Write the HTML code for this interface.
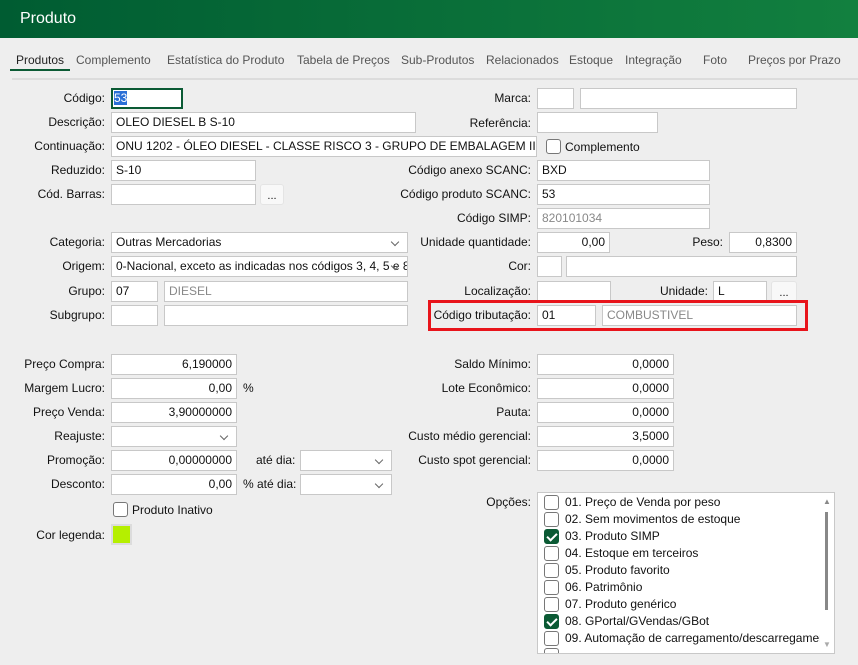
<!DOCTYPE html>
<html><head><meta charset="utf-8"><style>
*{box-sizing:border-box;margin:0;padding:0}
body{width:858px;height:665px;overflow:hidden;background:#eeeeee;font-family:"Liberation Sans",sans-serif;font-size:12px;color:#111;position:relative}
.hd{position:absolute;left:0;top:0;width:858px;height:38px;background:linear-gradient(90deg,#005c32,#12803f);color:#fff;font-size:16px;padding:10px 0 0 20px}
.tab{position:absolute;top:53px;font-size:12px;color:#555}
.l{position:absolute;text-align:right;white-space:nowrap;height:20px;line-height:20px}
.i{position:absolute;background:#fff;border:1px solid #c8c8c8;height:21px;line-height:19px;padding:0 4px;white-space:nowrap;overflow:hidden}
.r{text-align:right}
.g{color:#888}
.s::after{content:"";position:absolute;right:9px;top:6px;width:5px;height:5px;border-right:1px solid #666;border-bottom:1px solid #666;transform:rotate(45deg)}
.b{position:absolute;background:#f8f8f8;border:1px solid #e4e4e4;border-radius:3px;height:21px;text-align:center;line-height:22px;font-size:11px}
.cb{position:absolute;width:15px;height:15px;border:1px solid #777;border-radius:3px;background:#fff}
.ck{background:#0b5a34;border-color:#0b5a34}
.ck::after{content:"";position:absolute;left:4px;top:1px;width:4px;height:8px;border-right:2px solid #fff;border-bottom:2px solid #fff;transform:rotate(45deg)}
.opt{position:absolute;left:565px;height:17px;line-height:17px}
</style></head><body>
<div class="hd">Produto</div>
<div class="tab" style="left:16px;color:#222">Produtos</div>
<div style="position:absolute;left:10px;top:69px;width:60px;height:2px;background:#0b5a34"></div>
<div class="tab" style="left:76px">Complemento</div>
<div class="tab" style="left:167px">Estatística do Produto</div>
<div class="tab" style="left:297px">Tabela de Preços</div>
<div class="tab" style="left:401px">Sub-Produtos</div>
<div class="tab" style="left:486px">Relacionados</div>
<div class="tab" style="left:569px">Estoque</div>
<div class="tab" style="left:625px">Integração</div>
<div class="tab" style="left:703px">Foto</div>
<div class="tab" style="left:748px">Preços por Prazo</div>
<div style="position:absolute;left:12px;top:78px;width:846px;height:2px;background:#dcdcdc"></div>

<div class="l" style="left:0;width:105px;top:88px">Código:</div>
<div class="i" style="left:111px;top:88px;width:72px;border:2px solid #0b5a34;line-height:17px;padding:0 1px"><span style="background:#2a6fd6;color:#fff">53</span></div>
<div class="l" style="left:0;width:105px;top:112px">Descrição:</div>
<div class="i" style="left:111px;top:112px;width:305px">OLEO DIESEL B S-10</div>
<div class="l" style="left:0;width:105px;top:136px">Continuação:</div>
<div class="i" style="left:111px;top:136px;width:426px">ONU 1202 - ÓLEO DIESEL - CLASSE RISCO 3 - GRUPO DE EMBALAGEM III</div>
<div class="l" style="left:0;width:105px;top:160px">Reduzido:</div>
<div class="i" style="left:111px;top:160px;width:145px">S-10</div>
<div class="l" style="left:0;width:105px;top:184px">Cód. Barras:</div>
<div class="i" style="left:111px;top:184px;width:145px"></div>
<div class="b" style="left:260px;top:184px;width:24px">...</div>
<div class="l" style="left:0;width:105px;top:232px">Categoria:</div>
<div class="i s" style="left:111px;top:232px;width:297px">Outras Mercadorias</div>
<div class="l" style="left:0;width:105px;top:256px">Origem:</div>
<div class="i s" style="left:111px;top:256px;width:297px;padding-right:20px">0-Nacional, exceto as indicadas nos códigos 3, 4, 5 e 8</div>
<div class="l" style="left:0;width:105px;top:281px">Grupo:</div>
<div class="i" style="left:111px;top:281px;width:47px">07</div>
<div class="i g" style="left:164px;top:281px;width:244px">DIESEL</div>
<div class="l" style="left:0;width:105px;top:305px">Subgrupo:</div>
<div class="i" style="left:111px;top:305px;width:47px"></div>
<div class="i" style="left:164px;top:305px;width:244px"></div>

<div class="l" style="left:300px;width:231px;top:88px">Marca:</div>
<div class="i" style="left:537px;top:88px;width:37px"></div>
<div class="i" style="left:580px;top:88px;width:217px"></div>
<div class="l" style="left:300px;width:231px;top:113px">Referência:</div>
<div class="i" style="left:537px;top:112px;width:121px"></div>
<div class="cb" style="left:546px;top:139px"></div>
<div class="l" style="left:565px;top:137px">Complemento</div>
<div class="l" style="left:300px;width:231px;top:160px">Código anexo SCANC:</div>
<div class="i" style="left:537px;top:160px;width:173px">BXD</div>
<div class="l" style="left:300px;width:231px;top:184px">Código produto SCANC:</div>
<div class="i" style="left:537px;top:184px;width:173px">53</div>
<div class="l" style="left:300px;width:231px;top:208px">Código SIMP:</div>
<div class="i g" style="left:537px;top:208px;width:173px">820101034</div>
<div class="l" style="left:300px;width:231px;top:232px">Unidade quantidade:</div>
<div class="i r" style="left:537px;top:232px;width:73px">0,00</div>
<div class="l" style="left:600px;width:123px;top:232px">Peso:</div>
<div class="i r" style="left:729px;top:232px;width:68px">0,8300</div>
<div class="l" style="left:300px;width:231px;top:256px">Cor:</div>
<div class="i" style="left:537px;top:256px;width:25px"></div>
<div class="i" style="left:566px;top:256px;width:231px"></div>
<div class="l" style="left:300px;width:231px;top:281px">Localização:</div>
<div class="i" style="left:537px;top:281px;width:74px"></div>
<div class="l" style="left:600px;width:108px;top:281px">Unidade:</div>
<div class="i" style="left:713px;top:281px;width:54px">L</div>
<div class="b" style="left:771px;top:281px;width:26px">...</div>
<div style="position:absolute;left:428px;top:300px;width:380px;height:31px;border:3px solid #e8141b"></div>
<div class="l" style="left:300px;width:231px;top:305px">Código tributação:</div>
<div class="i" style="left:537px;top:305px;width:59px">01</div>
<div class="i g" style="left:602px;top:305px;width:195px">COMBUSTIVEL</div>

<div class="l" style="left:0;width:105px;top:354px">Preço Compra:</div>
<div class="i r" style="left:111px;top:354px;width:126px">6,190000</div>
<div class="l" style="left:0;width:105px;top:378px">Margem Lucro:</div>
<div class="i r" style="left:111px;top:378px;width:126px">0,00</div>
<div class="l" style="left:243px;top:378px">%</div>
<div class="l" style="left:0;width:105px;top:402px">Preço Venda:</div>
<div class="i r" style="left:111px;top:402px;width:126px">3,90000000</div>
<div class="l" style="left:0;width:105px;top:426px">Reajuste:</div>
<div class="i s" style="left:111px;top:426px;width:126px"></div>
<div class="l" style="left:0;width:105px;top:450px">Promoção:</div>
<div class="i r" style="left:111px;top:450px;width:126px">0,00000000</div>
<div class="l" style="left:256px;top:450px">até dia:</div>
<div class="i s" style="left:300px;top:450px;width:92px"></div>
<div class="l" style="left:0;width:105px;top:474px">Desconto:</div>
<div class="i r" style="left:111px;top:474px;width:126px">0,00</div>
<div class="l" style="left:243px;top:474px">% até dia:</div>
<div class="i s" style="left:300px;top:474px;width:92px"></div>
<div class="cb" style="left:113px;top:502px"></div>
<div class="l" style="left:132px;top:500px">Produto Inativo</div>
<div class="l" style="left:0;width:105px;top:525px">Cor legenda:</div>
<div style="position:absolute;left:111px;top:524px;width:21px;height:21px;background:#dcdcdc;padding:2px"><div style="width:17px;height:17px;background:#b5ef00"></div></div>

<div class="l" style="left:300px;width:231px;top:354px">Saldo Mínimo:</div>
<div class="i r" style="left:537px;top:354px;width:137px">0,0000</div>
<div class="l" style="left:300px;width:231px;top:378px">Lote Econômico:</div>
<div class="i r" style="left:537px;top:378px;width:137px">0,0000</div>
<div class="l" style="left:300px;width:231px;top:402px">Pauta:</div>
<div class="i r" style="left:537px;top:402px;width:137px">0,0000</div>
<div class="l" style="left:300px;width:231px;top:426px">Custo médio gerencial:</div>
<div class="i r" style="left:537px;top:426px;width:137px">3,5000</div>
<div class="l" style="left:300px;width:231px;top:450px">Custo spot gerencial:</div>
<div class="i r" style="left:537px;top:450px;width:137px">0,0000</div>

<div class="l" style="left:300px;width:231px;top:492px">Opções:</div>
<div style="position:absolute;left:537px;top:492px;width:298px;height:162px;background:#fff;border:1px solid #c8c8c8;overflow:hidden"></div>
<div style="position:absolute;left:823px;top:497px;font-size:8px;color:#888">▲</div>
<div style="position:absolute;left:825px;top:512px;width:3px;height:98px;background:#888"></div>
<div style="position:absolute;left:823px;top:640px;font-size:8px;color:#aaa">▼</div>
<div class="cb" style="left:544px;top:495px"></div><div class="opt" style="top:494px">01. Preço de Venda por peso</div>
<div class="cb" style="left:544px;top:512px"></div><div class="opt" style="top:511px">02. Sem movimentos de estoque</div>
<div class="cb ck" style="left:544px;top:529px"></div><div class="opt" style="top:528px">03. Produto SIMP</div>
<div class="cb" style="left:544px;top:546px"></div><div class="opt" style="top:545px">04. Estoque em terceiros</div>
<div class="cb" style="left:544px;top:563px"></div><div class="opt" style="top:562px">05. Produto favorito</div>
<div class="cb" style="left:544px;top:580px"></div><div class="opt" style="top:579px">06. Patrimônio</div>
<div class="cb" style="left:544px;top:597px"></div><div class="opt" style="top:596px">07. Produto genérico</div>
<div class="cb ck" style="left:544px;top:614px"></div><div class="opt" style="top:613px">08. GPortal/GVendas/GBot</div>
<div class="cb" style="left:544px;top:631px"></div><div class="opt" style="top:630px;width:255px;overflow:hidden;white-space:nowrap">09. Automação de carregamento/descarregamento</div>
<div class="cb" style="left:544px;top:648px;height:5px;border-bottom:none;border-radius:3px 3px 0 0"></div>
</body></html>
